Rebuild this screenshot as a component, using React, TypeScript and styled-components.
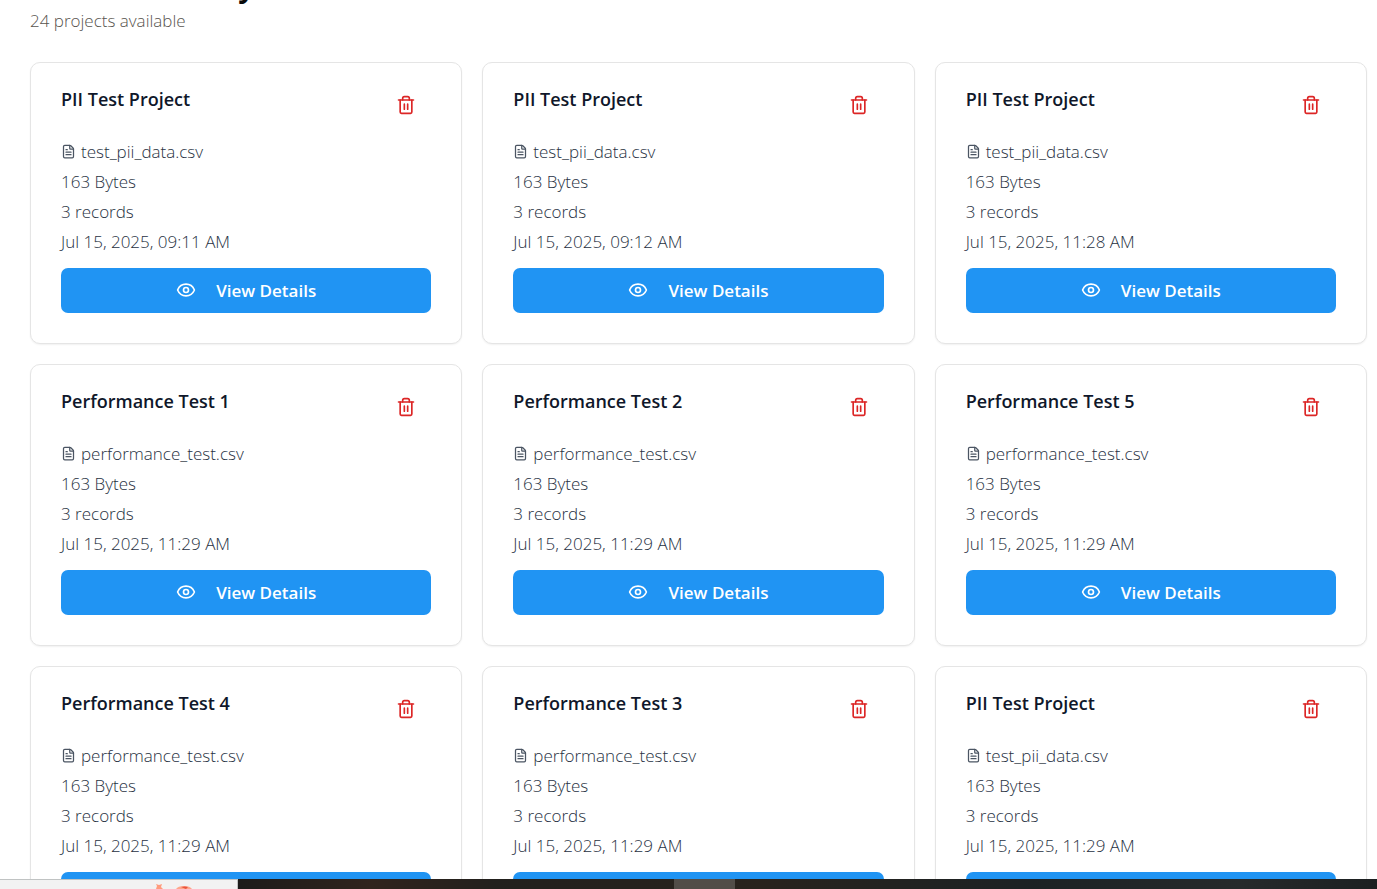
import React from "react";
import styled, { createGlobalStyle } from "styled-components";
import { Eye, FileText } from "lucide-react";

const GlobalStyle = createGlobalStyle`
  * { box-sizing: border-box; }
  body {
    margin: 0;
    background: #ffffff;
    font-family: "Open Sans", "Noto Sans", sans-serif;
  }
`;

const Viewport = styled.div`
  height: 100vh;
  overflow: hidden;
`;

const Page = styled.main`
  padding: 0 10px 60px 30px;
`;

const TitleClip = styled.div`
  display: flex;
  align-items: flex-end;
  height: 6px;
  overflow: hidden;
`;

const PageTitle = styled.h1`
  margin: 0;
  font-size: 29px;
  line-height: 40px;
  font-weight: 700;
  color: #0a0a0a;
`;

const Subtitle = styled.p`
  margin: 0 0 26px;
  font-size: 17px;
  line-height: 30px;
  font-weight: 300;
  color: #57534e;
`;

const Grid = styled.div`
  display: grid;
  grid-template-columns: repeat(3, minmax(0, 1fr));
  gap: 20px;
`;

const Card = styled.article`
  display: flex;
  flex-direction: column;
  padding: 20px 30px 30px;
  border: 1px solid #e5e5e5;
  border-radius: 10px;
  background: #ffffff;
  box-shadow: 0 1px 2px rgba(0, 0, 0, 0.06);
`;

const CardHeader = styled.header`
  display: flex;
  justify-content: space-between;
  align-items: flex-start;
  margin-bottom: 10px;
`;

const CardTitle = styled.h2`
  margin: 0;
  font-size: 18px;
  line-height: 32px;
  font-weight: 600;
  color: #0f172a;
`;

const DeleteButton = styled.button`
  display: flex;
  align-items: center;
  justify-content: center;
  width: 50px;
  height: 44px;
  padding: 0;
  border: 0;
  background: transparent;
  color: #dc2626;
  cursor: pointer;
`;

const Details = styled.ul`
  margin: 0 0 11px;
  padding: 0;
  list-style: none;
`;

const Detail = styled.li`
  display: flex;
  align-items: center;
  gap: 5px;
  font-size: 17px;
  line-height: 30px;
  font-weight: 300;
  color: #273142;

  svg {
    margin-bottom: 2px;
    color: #4b5563;
  }
`;

const ViewButton = styled.button`
  display: flex;
  align-items: center;
  justify-content: center;
  gap: 20px;
  height: 45px;
  padding: 0;
  border: 0;
  border-radius: 7px;
  background: #2094f3;
  color: #ffffff;
  font-family: inherit;
  font-size: 17px;
  font-weight: 600;
  cursor: pointer;

  svg {
    margin-bottom: 2px;
  }
`;

const Taskbar = styled.footer`
  position: fixed;
  left: 0;
  right: 0;
  bottom: 0;
  display: flex;
  height: 10px;
  background: linear-gradient(90deg, #1c1b1a 17%, #30241d 27%, #22201d 36%, #28231d 55%, #1c2224 75%, #262a2b 90%, #1c2021 100%);
`;

const SearchBox = styled.div`
  display: flex;
  width: 238px;
  padding-left: 154px;
  border-top: 1px solid #c0c3c3;
  border-right: 1px solid #c0c3c3;
  background: #f2f2f2;
`;

const ActiveApp = styled.div`
  width: 61px;
  margin-left: 436px;
  background: #514d48;
`;

interface Project {
  name: string;
  file: string;
  date: string;
}

const projects: Project[] = [
  { name: "PII Test Project", file: "test_pii_data.csv", date: "Jul 15, 2025, 09:11 AM" },
  { name: "PII Test Project", file: "test_pii_data.csv", date: "Jul 15, 2025, 09:12 AM" },
  { name: "PII Test Project", file: "test_pii_data.csv", date: "Jul 15, 2025, 11:28 AM" },
  { name: "Performance Test 1", file: "performance_test.csv", date: "Jul 15, 2025, 11:29 AM" },
  { name: "Performance Test 2", file: "performance_test.csv", date: "Jul 15, 2025, 11:29 AM" },
  { name: "Performance Test 5", file: "performance_test.csv", date: "Jul 15, 2025, 11:29 AM" },
  { name: "Performance Test 4", file: "performance_test.csv", date: "Jul 15, 2025, 11:29 AM" },
  { name: "Performance Test 3", file: "performance_test.csv", date: "Jul 15, 2025, 11:29 AM" },
  { name: "PII Test Project", file: "test_pii_data.csv", date: "Jul 15, 2025, 11:29 AM" },
];

function TrashIcon() {
  return (
    <svg
      width="20"
      height="20"
      viewBox="0 0 24 24"
      fill="none"
      stroke="currentColor"
      strokeWidth="2"
      strokeLinecap="round"
      strokeLinejoin="round"
      aria-hidden="true"
    >
      <path d="M3 6h18" />
      <path d="M19 6v14.5c0 .9-.6 1.5-1.5 1.5h-11C5.600 22 5 21.400 5 20.500V6" />
      <path d="M8 6V4c0-1 1-2 2-2h4c1 0 2 1 2 2v2" />
      <path d="M10 11v6M14 11v6" />
    </svg>
  );
}

function ProjectCard({ project }: { project: Project }) {
  return (
    <Card>
      <CardHeader>
        <CardTitle>{project.name}</CardTitle>
        <DeleteButton type="button" aria-label={`Delete ${project.name}`}>
          <TrashIcon />
        </DeleteButton>
      </CardHeader>
      <Details>
        <Detail>
          <FileText size={15} />
          {project.file}
        </Detail>
        <Detail>163 Bytes</Detail>
        <Detail>3 records</Detail>
        <Detail>{project.date}</Detail>
      </Details>
      <ViewButton type="button">
        <Eye size={20} />
        View Details
      </ViewButton>
    </Card>
  );
}

export default function App() {
  return (
    <Viewport>
      <GlobalStyle />
      <Page>
        <TitleClip>
          <PageTitle>Dataset Library</PageTitle>
        </TitleClip>
        <Subtitle>24 projects available</Subtitle>
        <Grid>
          {projects.map((project, index) => (
            <ProjectCard key={index} project={project} />
          ))}
        </Grid>
      </Page>
      <Taskbar>
        <SearchBox>
          <svg width="42" height="9" viewBox="0 0 42 9" aria-hidden="true">
            <path d="M2 9l1-3-1-2 3 1 3-1-1 3 2 2z" fill="#ff9b7d" />
            <path d="M22 9q2-3 8-3t8 3z" fill="#ffa68a" />
            <path d="M27 7q4-1 7 0l-2 2z" fill="#e8553f" />
          </svg>
        </SearchBox>
        <ActiveApp />
      </Taskbar>
    </Viewport>
  );
}
